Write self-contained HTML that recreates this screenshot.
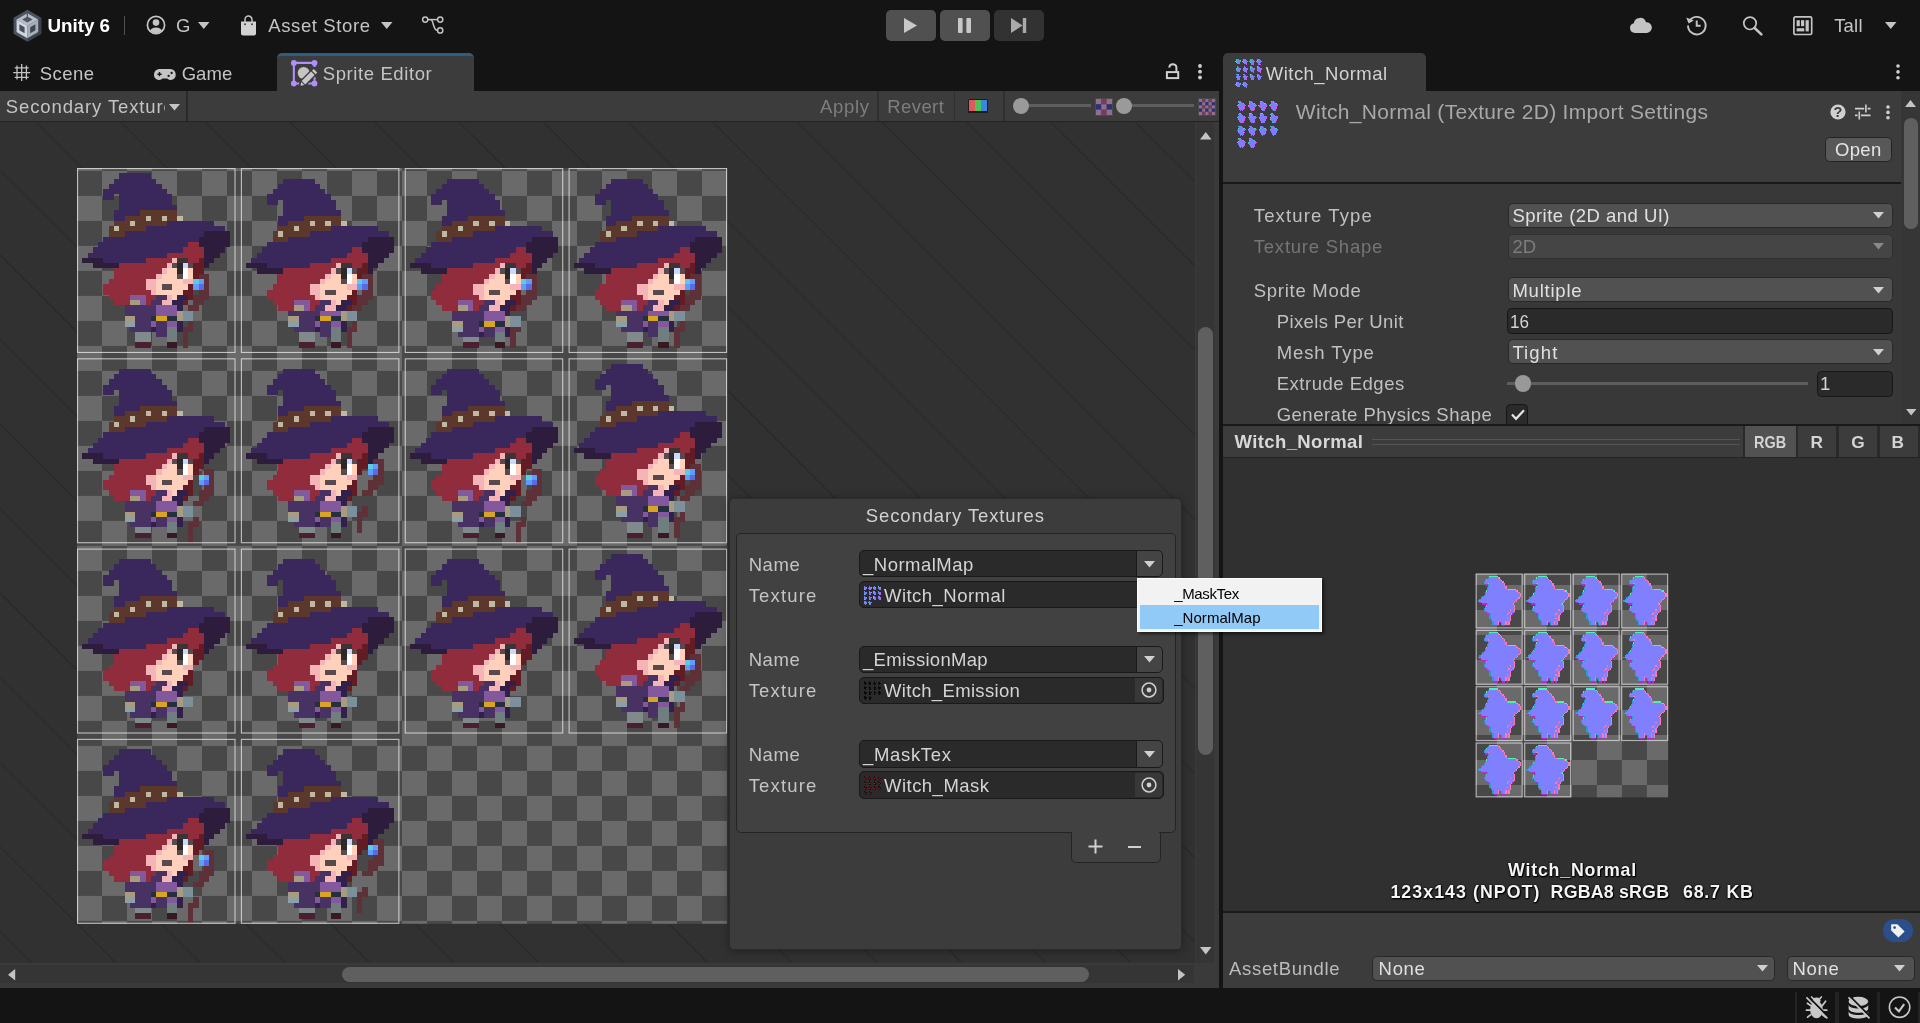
<!DOCTYPE html>
<html><head><meta charset="utf-8"><title>Unity - Sprite Editor</title>
<style>
html,body{margin:0;padding:0;}
body{width:1920px;height:1023px;overflow:hidden;background:#141414;position:relative;font-family:"Liberation Sans",sans-serif;}
.a{position:absolute;box-sizing:border-box;}
.t{position:absolute;white-space:nowrap;}
svg{display:block;overflow:visible;}
</style></head><body><div id="root" style="position:absolute;left:0;top:0;width:1920px;height:1023px;will-change:transform;">
<div class="a" style="left:0px;top:91px;width:1219px;height:30px;background:#3c3c3c;"></div>
<div class="a" style="left:0px;top:121px;width:1219px;height:1.5px;background:#232323;"></div>
<div class="a" style="left:0;top:122px;width:1196px;height:841px;background:#313131;overflow:hidden;"><svg style="position:absolute;left:0;top:-122px" width="1195" height="962"><g stroke="#2a2a2a" stroke-width="1.1" fill="none"><path d="M-809.4 122L30.6 962"/><path d="M-724.8 122L115.2 962"/><path d="M-640.3 122L199.7 962"/><path d="M-555.7 122L284.3 962"/><path d="M-471.1 122L368.9 962"/><path d="M-386.6 122L453.4 962"/><path d="M-302.0 122L538.0 962"/><path d="M-217.4 122L622.6 962"/><path d="M-132.9 122L707.1 962"/><path d="M-48.3 122L791.7 962"/><path d="M36.3 122L876.3 962"/><path d="M120.9 122L960.9 962"/><path d="M205.4 122L1045.4 962"/><path d="M290.0 122L1130.0 962"/><path d="M374.6 122L1214.6 962"/><path d="M459.1 122L1299.1 962"/><path d="M543.7 122L1383.7 962"/><path d="M628.3 122L1468.3 962"/><path d="M712.8 122L1552.8 962"/><path d="M797.4 122L1637.4 962"/><path d="M882.0 122L1722.0 962"/><path d="M966.5 122L1806.5 962"/><path d="M1051.1 122L1891.1 962"/><path d="M1135.7 122L1975.7 962"/></g></svg></div>
<svg class="a" style="left:0;top:0" width="1195" height="962"><defs><pattern id="chk" x="77" y="145.9" width="50" height="50" patternUnits="userSpaceOnUse"><rect width="50" height="50" fill="#6a6a6a"/><rect x="0" y="25" width="25" height="25" fill="#484848"/><rect x="25" y="0" width="25" height="25" fill="#484848"/></pattern><g id="hd" shape-rendering="crispEdges"><rect x="8" y="1" width="6" height="1" fill="#3a285c"/><rect x="7" y="2" width="8" height="1" fill="#3a285c"/><rect x="6" y="3" width="10" height="1" fill="#3a285c"/><rect x="5" y="4" width="12" height="1" fill="#3a285c"/><rect x="5" y="5" width="2" height="1" fill="#3a285c"/><rect x="8" y="5" width="10" height="1" fill="#3a285c"/><rect x="8" y="6" width="10" height="1" fill="#3a285c"/><rect x="8" y="7" width="11" height="1" fill="#3a285c"/><rect x="7" y="8" width="5" height="1" fill="#3a285c"/><rect x="12" y="8" width="7" height="1" fill="#5c382c"/><rect x="7" y="9" width="2" height="1" fill="#3a285c"/><rect x="9" y="9" width="4" height="1" fill="#5c382c"/><rect x="13" y="9" width="1" height="1" fill="#c0b8a0"/><rect x="14" y="9" width="2" height="1" fill="#5c382c"/><rect x="16" y="9" width="1" height="1" fill="#c0b8a0"/><rect x="17" y="9" width="2" height="1" fill="#5c382c"/><rect x="19" y="9" width="1" height="1" fill="#c0b8a0"/><rect x="7" y="10" width="3" height="1" fill="#5c382c"/><rect x="10" y="10" width="1" height="1" fill="#c0b8a0"/><rect x="11" y="10" width="6" height="1" fill="#5c382c"/><rect x="17" y="10" width="9" height="1" fill="#3a285c"/><rect x="6" y="11" width="1" height="1" fill="#5c382c"/><rect x="7" y="11" width="1" height="1" fill="#c0b8a0"/><rect x="8" y="11" width="5" height="1" fill="#5c382c"/><rect x="13" y="11" width="15" height="1" fill="#3a285c"/><rect x="6" y="12" width="3" height="1" fill="#5c382c"/><rect x="9" y="12" width="15" height="1" fill="#3a285c"/><rect x="24" y="12" width="5" height="1" fill="#2e1c3c"/><rect x="5" y="13" width="18" height="1" fill="#3a285c"/><rect x="23" y="13" width="6" height="1" fill="#2e1c3c"/><rect x="4" y="14" width="17" height="1" fill="#3a285c"/><rect x="21" y="14" width="2" height="1" fill="#902c3c"/><rect x="23" y="14" width="6" height="1" fill="#2e1c3c"/><rect x="3" y="15" width="17" height="1" fill="#3a285c"/><rect x="20" y="15" width="4" height="1" fill="#902c3c"/><rect x="24" y="15" width="4" height="1" fill="#2e1c3c"/><rect x="2" y="16" width="15" height="1" fill="#3a285c"/><rect x="17" y="16" width="7" height="1" fill="#902c3c"/><rect x="24" y="16" width="3" height="1" fill="#2e1c3c"/><rect x="1" y="17" width="4" height="1" fill="#2e1c3c"/><rect x="5" y="17" width="8" height="1" fill="#3a285c"/><rect x="13" y="17" width="5" height="1" fill="#902c3c"/><rect x="18" y="17" width="1" height="1" fill="#f4b4b8"/><rect x="19" y="17" width="2" height="1" fill="#3a3436"/><rect x="21" y="17" width="2" height="1" fill="#902c3c"/><rect x="23" y="17" width="1" height="1" fill="#641c24"/><rect x="24" y="17" width="2" height="1" fill="#2e1c3c"/><rect x="3" y="18" width="5" height="1" fill="#2e1c3c"/><rect x="8" y="18" width="9" height="1" fill="#902c3c"/><rect x="17" y="18" width="1" height="1" fill="#f4b4b8"/><rect x="18" y="18" width="1" height="1" fill="#564a4e"/><rect x="19" y="18" width="1" height="1" fill="#2c2828"/><rect x="20" y="18" width="1" height="1" fill="#c8d8ff"/><rect x="21" y="18" width="1" height="1" fill="#564a4e"/><rect x="22" y="18" width="2" height="1" fill="#641c24"/><rect x="24" y="18" width="1" height="1" fill="#2e1c3c"/><rect x="7" y="19" width="9" height="1" fill="#902c3c"/><rect x="16" y="19" width="1" height="1" fill="#f4b4b8"/><rect x="17" y="19" width="2" height="1" fill="#ffd0bc"/><rect x="19" y="19" width="1" height="1" fill="#2c2828"/><rect x="20" y="19" width="1" height="1" fill="#ffffff"/><rect x="21" y="19" width="1" height="1" fill="#ffd0bc"/><rect x="22" y="19" width="2" height="1" fill="#641c24"/><rect x="7" y="20" width="8" height="1" fill="#902c3c"/><rect x="15" y="20" width="1" height="1" fill="#f4b4b8"/><rect x="16" y="20" width="3" height="1" fill="#ffd0bc"/><rect x="19" y="20" width="1" height="1" fill="#564a4e"/><rect x="20" y="20" width="1" height="1" fill="#ffffff"/><rect x="21" y="20" width="1" height="1" fill="#ffd0bc"/><rect x="22" y="20" width="1" height="1" fill="#641c24"/><rect x="6" y="21" width="7" height="1" fill="#902c3c"/><rect x="13" y="21" width="2" height="1" fill="#f4b4b8"/><rect x="15" y="21" width="5" height="1" fill="#ffd0bc"/><rect x="20" y="21" width="2" height="1" fill="#f4b4b8"/><rect x="5" y="22" width="8" height="1" fill="#902c3c"/><rect x="13" y="22" width="2" height="1" fill="#f4b4b8"/><rect x="15" y="22" width="1" height="1" fill="#ffd0bc"/><rect x="16" y="22" width="2" height="1" fill="#564a4e"/><rect x="18" y="22" width="3" height="1" fill="#ffd0bc"/><rect x="21" y="22" width="1" height="1" fill="#641c24"/><rect x="5" y="23" width="9" height="1" fill="#902c3c"/><rect x="14" y="23" width="1" height="1" fill="#f4b4b8"/><rect x="15" y="23" width="5" height="1" fill="#ffd0bc"/><rect x="20" y="23" width="2" height="1" fill="#641c24"/><rect x="6" y="24" width="4" height="1" fill="#902c3c"/><rect x="10" y="24" width="3" height="1" fill="#84589c"/><rect x="13" y="24" width="2" height="1" fill="#902c3c"/><rect x="15" y="24" width="2" height="1" fill="#483264"/><rect x="17" y="24" width="1" height="1" fill="#f4b4b8"/><rect x="18" y="24" width="1" height="1" fill="#ffd0bc"/><rect x="19" y="24" width="2" height="1" fill="#32204c"/><rect x="21" y="24" width="1" height="1" fill="#641c24"/><rect x="7" y="25" width="3" height="1" fill="#902c3c"/><rect x="10" y="25" width="2" height="1" fill="#a89c80"/><rect x="12" y="25" width="1" height="1" fill="#84589c"/><rect x="13" y="25" width="1" height="1" fill="#902c3c"/><rect x="14" y="25" width="2" height="1" fill="#483264"/><rect x="16" y="25" width="2" height="1" fill="#f4b4b8"/><rect x="18" y="25" width="2" height="1" fill="#32204c"/><rect x="20" y="25" width="1" height="1" fill="#641c24"/></g><g id="hs" shape-rendering="crispEdges"><rect x="23" y="20" width="2" height="1" fill="#5e3038"/><rect x="22" y="21" width="1" height="1" fill="#5ccce0"/><rect x="23" y="21" width="1" height="1" fill="#609cff"/><rect x="24" y="21" width="1" height="1" fill="#5e3038"/><rect x="22" y="22" width="1" height="1" fill="#609cff"/><rect x="23" y="22" width="1" height="1" fill="#586ce0"/><rect x="24" y="22" width="1" height="1" fill="#5e3038"/><rect x="23" y="23" width="2" height="1" fill="#5e3038"/><rect x="22" y="24" width="3" height="1" fill="#5e3038"/><rect x="22" y="25" width="2" height="1" fill="#5e3038"/></g><g id="bd" shape-rendering="crispEdges"><rect x="9" y="26" width="6" height="1" fill="#483264"/><rect x="15" y="26" width="4" height="1" fill="#84589c"/><rect x="19" y="26" width="1" height="1" fill="#32204c"/><rect x="9" y="27" width="6" height="1" fill="#483264"/><rect x="15" y="27" width="4" height="1" fill="#84589c"/><rect x="19" y="27" width="1" height="1" fill="#a89c80"/><rect x="20" y="27" width="2" height="1" fill="#7c909c"/><rect x="9" y="28" width="2" height="1" fill="#a89c80"/><rect x="11" y="28" width="3" height="1" fill="#483264"/><rect x="14" y="28" width="1" height="1" fill="#24303c"/><rect x="15" y="28" width="2" height="1" fill="#d8a424"/><rect x="17" y="28" width="2" height="1" fill="#24303c"/><rect x="19" y="28" width="1" height="1" fill="#a89c80"/><rect x="20" y="28" width="2" height="1" fill="#7c909c"/><rect x="9" y="29" width="2" height="1" fill="#8ca0a8"/><rect x="11" y="29" width="3" height="1" fill="#483264"/><rect x="14" y="29" width="1" height="1" fill="#84589c"/><rect x="15" y="29" width="2" height="1" fill="#483264"/><rect x="17" y="29" width="2" height="1" fill="#84589c"/><rect x="19" y="29" width="1" height="1" fill="#32204c"/><rect x="10" y="30" width="4" height="1" fill="#483264"/><rect x="14" y="30" width="1" height="1" fill="#32204c"/><rect x="15" y="30" width="2" height="1" fill="#483264"/><rect x="17" y="30" width="2" height="1" fill="#707e80"/><rect x="19" y="30" width="1" height="1" fill="#32204c"/></g><g id="lg" shape-rendering="crispEdges"><rect x="11" y="31" width="3" height="1" fill="#808a8c"/><rect x="15" y="31" width="2" height="1" fill="#483264"/><rect x="17" y="31" width="2" height="1" fill="#707e80"/><rect x="11" y="32" width="3" height="1" fill="#808a8c"/><rect x="17" y="32" width="2" height="1" fill="#707e80"/><rect x="11" y="33" width="3" height="1" fill="#4a2030"/><rect x="17" y="33" width="2" height="1" fill="#381822"/></g><g id="bs" shape-rendering="crispEdges"><rect x="21" y="26" width="2" height="1" fill="#5e3038"/><rect x="21" y="29" width="1" height="1" fill="#5e3038"/><rect x="20" y="30" width="2" height="1" fill="#5e3038"/><rect x="20" y="31" width="1" height="1" fill="#5e3038"/><rect x="20" y="32" width="1" height="1" fill="#5e3038"/><rect x="20" y="33" width="1" height="1" fill="#5e3038"/></g><g id="sil" shape-rendering="crispEdges"><rect x="8" y="1" width="6" height="1"/><rect x="7" y="2" width="8" height="1"/><rect x="6" y="3" width="10" height="1"/><rect x="5" y="4" width="12" height="1"/><rect x="5" y="5" width="2" height="1"/><rect x="8" y="5" width="10" height="1"/><rect x="8" y="6" width="10" height="1"/><rect x="8" y="7" width="11" height="1"/><rect x="7" y="8" width="12" height="1"/><rect x="7" y="9" width="13" height="1"/><rect x="7" y="10" width="19" height="1"/><rect x="6" y="11" width="22" height="1"/><rect x="6" y="12" width="23" height="1"/><rect x="5" y="13" width="24" height="1"/><rect x="4" y="14" width="25" height="1"/><rect x="3" y="15" width="25" height="1"/><rect x="2" y="16" width="25" height="1"/><rect x="1" y="17" width="25" height="1"/><rect x="3" y="18" width="22" height="1"/><rect x="7" y="19" width="17" height="1"/><rect x="7" y="20" width="18" height="1"/><rect x="6" y="21" width="19" height="1"/><rect x="5" y="22" width="20" height="1"/><rect x="5" y="23" width="17" height="1"/><rect x="23" y="23" width="2" height="1"/><rect x="6" y="24" width="19" height="1"/><rect x="7" y="25" width="14" height="1"/><rect x="22" y="25" width="2" height="1"/><rect x="9" y="26" width="11" height="1"/><rect x="21" y="26" width="2" height="1"/><rect x="9" y="27" width="13" height="1"/><rect x="9" y="28" width="13" height="1"/><rect x="9" y="29" width="11" height="1"/><rect x="21" y="29" width="1" height="1"/><rect x="10" y="30" width="12" height="1"/><rect x="11" y="31" width="3" height="1"/><rect x="15" y="31" width="4" height="1"/><rect x="20" y="31" width="1" height="1"/><rect x="11" y="32" width="3" height="1"/><rect x="17" y="32" width="2" height="1"/><rect x="20" y="32" width="1" height="1"/><rect x="11" y="33" width="3" height="1"/><rect x="17" y="33" width="2" height="1"/><rect x="20" y="33" width="1" height="1"/></g></defs><rect x="77.0" y="168.0" width="650.12" height="755.83" fill="url(#chk)"/><g transform="translate(77.000 168.000) scale(5.2855)"><use href="#lg"/><use href="#bs" x="0" y="0"/><use href="#bd" y="0"/><use href="#hd" y="0"/><use href="#hs" x="0" y="0"/></g><rect x="77.55" y="168.55" width="157.47" height="183.89" fill="none" stroke="rgba(255,255,255,0.66)" stroke-width="1.1"/><g transform="translate(240.850 168.000) scale(5.2855)"><use href="#lg"/><use href="#bs" x="0" y="0"/><use href="#bd" y="0"/><use href="#hd" y="1"/><use href="#hs" x="0" y="0"/></g><rect x="241.40" y="168.55" width="157.47" height="183.89" fill="none" stroke="rgba(255,255,255,0.66)" stroke-width="1.1"/><g transform="translate(404.701 168.000) scale(5.2855)"><use href="#lg"/><use href="#bs" x="0" y="0"/><use href="#bd" y="1"/><use href="#hd" y="1"/><use href="#hs" x="0" y="0"/></g><rect x="405.25" y="168.55" width="157.47" height="183.89" fill="none" stroke="rgba(255,255,255,0.66)" stroke-width="1.1"/><g transform="translate(568.552 168.000) scale(5.2855)"><use href="#lg"/><use href="#bs" x="0" y="0"/><use href="#bd" y="0"/><use href="#hd" y="1"/><use href="#hs" x="0" y="0"/></g><rect x="569.10" y="168.55" width="157.47" height="183.89" fill="none" stroke="rgba(255,255,255,0.66)" stroke-width="1.1"/><g transform="translate(77.000 358.278) scale(5.2855)"><use href="#lg"/><use href="#bs" x="1" y="1"/><use href="#bd" y="1"/><use href="#hd" y="1"/><use href="#hs" x="1" y="1"/></g><rect x="77.55" y="358.83" width="157.47" height="183.89" fill="none" stroke="rgba(255,255,255,0.66)" stroke-width="1.1"/><g transform="translate(240.850 358.278) scale(5.2855)"><use href="#lg"/><use href="#bs" x="2" y="-1"/><use href="#bd" y="1"/><use href="#hd" y="1"/><use href="#hs" x="2" y="-1"/></g><rect x="241.40" y="358.83" width="157.47" height="183.89" fill="none" stroke="rgba(255,255,255,0.66)" stroke-width="1.1"/><g transform="translate(404.701 358.278) scale(5.2855)"><use href="#lg"/><use href="#bs" x="1" y="1"/><use href="#bd" y="1"/><use href="#hd" y="1"/><use href="#hs" x="1" y="1"/></g><rect x="405.25" y="358.83" width="157.47" height="183.89" fill="none" stroke="rgba(255,255,255,0.66)" stroke-width="1.1"/><g transform="translate(568.552 358.278) scale(5.2855)"><use href="#lg"/><use href="#bs" x="0" y="0"/><use href="#bd" y="0"/><use href="#hd" y="0"/><use href="#hs" x="0" y="0"/></g><rect x="569.10" y="358.83" width="157.47" height="183.89" fill="none" stroke="rgba(255,255,255,0.66)" stroke-width="1.1"/><g transform="translate(77.000 548.556) scale(5.2855)"><use href="#lg"/><use href="#bd" y="1"/><use href="#hd" y="1"/></g><rect x="77.55" y="549.11" width="157.47" height="183.89" fill="none" stroke="rgba(255,255,255,0.66)" stroke-width="1.1"/><g transform="translate(240.850 548.556) scale(5.2855)"><use href="#lg"/><use href="#bd" y="1"/><use href="#hd" y="1"/></g><rect x="241.40" y="549.11" width="157.47" height="183.89" fill="none" stroke="rgba(255,255,255,0.66)" stroke-width="1.1"/><g transform="translate(404.701 548.556) scale(5.2855)"><use href="#lg"/><use href="#bd" y="1"/><use href="#hd" y="1"/></g><rect x="405.25" y="549.11" width="157.47" height="183.89" fill="none" stroke="rgba(255,255,255,0.66)" stroke-width="1.1"/><g transform="translate(568.552 548.556) scale(5.2855)"><use href="#lg"/><use href="#bs" x="0" y="0"/><use href="#bd" y="0"/><use href="#hd" y="0"/><use href="#hs" x="0" y="0"/></g><rect x="569.10" y="549.11" width="157.47" height="183.89" fill="none" stroke="rgba(255,255,255,0.66)" stroke-width="1.1"/><g transform="translate(77.000 738.834) scale(5.2855)"><use href="#lg"/><use href="#bs" x="1" y="1"/><use href="#bd" y="1"/><use href="#hd" y="1"/><use href="#hs" x="1" y="1"/></g><rect x="77.55" y="739.38" width="157.47" height="183.89" fill="none" stroke="rgba(255,255,255,0.66)" stroke-width="1.1"/><g transform="translate(240.850 738.834) scale(5.2855)"><use href="#lg"/><use href="#bs" x="2" y="-1"/><use href="#bd" y="1"/><use href="#hd" y="1"/><use href="#hs" x="2" y="-1"/></g><rect x="241.40" y="739.38" width="157.47" height="183.89" fill="none" stroke="rgba(255,255,255,0.66)" stroke-width="1.1"/></svg>
<div class="a" style="left:1195px;top:122px;width:24px;height:866px;background:#3a3a3a;"></div>
<div class="a" style="left:0px;top:963px;width:1219px;height:25px;background:#3a3a3a;"></div>
<div class="a" style="left:1196px;top:122px;width:18.2px;height:841px;background:#353535;"></div>
<div class="a" style="left:1198px;top:327px;width:15px;height:428px;background:#5f5f5f;border-radius:7.5px;"></div>
<svg class="a" style="left:1199.7px;top:131.5px;" width="11.5" height="7.5" viewBox="0 0 11.5 7.5"><path d="M0 7.5H11.5L5.75 0Z" fill="#c4c4c4"/></svg>
<svg class="a" style="left:1199.7px;top:946.9px;" width="11.5" height="7.5" viewBox="0 0 11.5 7.5"><path d="M0 0H11.5L5.75 7.5Z" fill="#c4c4c4"/></svg>
<div class="a" style="left:0px;top:965px;width:1194px;height:18px;background:#353535;"></div>
<div class="a" style="left:342px;top:967px;width:747px;height:15px;background:#5f5f5f;border-radius:7.5px;"></div>
<svg class="a" style="left:8px;top:968.8px;" width="7.2" height="11.5" viewBox="0 0 7.2 11.5"><path d="M7.2 0V11.5L0 5.75Z" fill="#c4c4c4"/></svg>
<svg class="a" style="left:1178.1px;top:968.8px;" width="7.2" height="11.5" viewBox="0 0 7.2 11.5"><path d="M0 0V11.5L7.2 5.75Z" fill="#c4c4c4"/></svg>
<div class="a" style="left:1219px;top:53px;width:4px;height:935px;background:#141414;"></div>
<svg class="a" style="left:0;top:0" width="60" height="52"><polygon points="27.40,9.70 41.26,17.70 41.26,33.70 27.40,41.70 13.54,33.70 13.54,17.70" fill="#4a535e"/><polygon points="41.26,17.70 41.26,33.70 27.40,41.70 27.40,38.18 38.21,31.94 38.21,19.46" fill="#3a424c"/><polygon points="16.59,19.46 27.40,13.22 38.21,19.46 27.40,25.70" fill="#b6bdc9"/><polygon points="16.59,19.46 27.40,25.70 27.40,38.18 16.59,31.94" fill="#d2d6de"/><polygon points="27.40,25.70 38.21,19.46 38.21,31.94 27.40,38.18" fill="#a6aebb"/><polygon points="22.21,19.46 27.40,16.46 32.59,19.46 27.40,22.46" fill="#4c5864"/><polygon points="19.40,24.33 24.59,27.32 24.59,33.31 19.40,30.32" fill="#46505c"/><polygon points="30.21,27.32 35.40,24.33 35.40,30.32 30.21,33.31" fill="#3e4650"/><path d="M27.40 13.22V17.70" stroke="#4c5864" stroke-width="1.2"/></svg>
<div class="t" style="left:47.50px;top:14px;height:23px;line-height:23px;font-size:18.8px;color:#ffffff;font-weight:bold;letter-spacing:-0.030px;">Unity 6</div>
<div class="a" style="left:123.5px;top:16px;width:1.5px;height:19px;background:#505050;"></div>
<svg class="a" style="left:146px;top:15px;" width="20" height="20" viewBox="0 0 20 20"><defs><clipPath id="acl"><circle cx="10" cy="10" r="8.2"/></clipPath></defs><circle cx="10" cy="10" r="8.6" fill="none" stroke="#c4c4c4" stroke-width="1.7"/><circle cx="10" cy="7.6" r="3.3" fill="#c4c4c4"/><ellipse cx="10" cy="17.5" rx="6.6" ry="5" fill="#c4c4c4" clip-path="url(#acl)"/></svg>
<div class="t" style="left:176.00px;top:14px;height:23px;line-height:23px;font-size:18.5px;color:#c4c4c4;font-weight:normal;letter-spacing:0.000px;">G</div>
<svg class="a" style="left:198.25px;top:22.2px;" width="11.5" height="7" viewBox="0 0 11.5 7"><path d="M0 0H11.5L5.75 7Z" fill="#c4c4c4"/></svg>
<svg class="a" style="left:240px;top:15px;" width="17" height="21" viewBox="0 0 17 21"><path d="M5 7V4.6a3.5 3.5 0 0 1 7 0V7" fill="none" stroke="#c4c4c4" stroke-width="1.5"/><path d="M1 6.5H16V18.5a2 2 0 0 1-2 2H3a2 2 0 0 1-2-2Z" fill="#d2d2d2"/><circle cx="5" cy="9.2" r="1" fill="#444"/><circle cx="12" cy="9.2" r="1" fill="#444"/></svg>
<div class="t" style="left:268.30px;top:14px;height:23px;line-height:23px;font-size:18.5px;color:#c4c4c4;font-weight:normal;letter-spacing:0.607px;">Asset Store</div>
<svg class="a" style="left:380.65px;top:22.2px;" width="11.5" height="7" viewBox="0 0 11.5 7"><path d="M0 0H11.5L5.75 7Z" fill="#c4c4c4"/></svg>
<svg class="a" style="left:421px;top:15px;" width="24" height="20" viewBox="0 0 24 20"><g fill="none" stroke="#c4c4c4" stroke-width="1.5"><circle cx="4.2" cy="4.6" r="2.6"/><circle cx="19.2" cy="4.6" r="2.6"/><circle cx="19.2" cy="15.4" r="2.6"/><path d="M6.8 4.6H16.6"/><path d="M9.5 4.6C13 4.6 11.5 15.4 16.6 15.4"/></g></svg>
<div class="a" style="left:886px;top:10px;width:50px;height:31px;background:#505050;border-radius:5px;"></div>
<div class="a" style="left:940px;top:10px;width:50px;height:31px;background:#505050;border-radius:5px;"></div>
<div class="a" style="left:994px;top:10px;width:50px;height:31px;background:#323232;border-radius:5px;"></div>
<svg class="a" style="left:904px;top:18px;" width="13" height="15" viewBox="0 0 13 15"><path d="M0 0L13 7.5L0 15Z" fill="#c8c8c8"/></svg>
<svg class="a" style="left:958.3px;top:18px;" width="13" height="15" viewBox="0 0 13 15"><rect x="0" y="0" width="4.6" height="15" rx="1" fill="#c8c8c8"/><rect x="8.4" y="0" width="4.6" height="15" rx="1" fill="#c8c8c8"/></svg>
<svg class="a" style="left:1011px;top:18px;" width="16" height="15" viewBox="0 0 16 15"><path d="M0 0L11.6 7.5L0 15Z" fill="#aaaaaa"/><rect x="11.8" y="0" width="3.4" height="15" fill="#aaaaaa"/></svg>
<svg class="a" style="left:1629px;top:16px;" width="24" height="18" viewBox="0 0 24 18"><path d="M6 17a5 5 0 0 1-1.2-9.85A6.3 6.3 0 0 1 17 6.2a5.4 5.4 0 0 1 .9 10.8Z" fill="#c4c4c4"/></svg>
<svg class="a" style="left:1685px;top:14px;" width="24" height="24" viewBox="0 0 24 24"><g fill="none" stroke="#c4c4c4" stroke-width="1.9"><path d="M4.2 7.2A8.8 8.8 0 1 1 3 11.6"/><path d="M11.7 6.5V11.8H15.6"/></g><path d="M1.2 3.6L3.6 9.6L8.8 6.6Z" fill="#c4c4c4"/></svg>
<svg class="a" style="left:1741px;top:14px;" width="24" height="24" viewBox="0 0 24 24"><circle cx="9" cy="9.3" r="6.2" fill="none" stroke="#c4c4c4" stroke-width="1.7"/><path d="M13.6 14L20.4 20.4" stroke="#c4c4c4" stroke-width="2.6" stroke-linecap="round"/></svg>
<svg class="a" style="left:1792.5px;top:15.5px;" width="20" height="20" viewBox="0 0 20 20"><rect x="0.9" y="0.9" width="17.8" height="17.6" rx="1.5" fill="none" stroke="#c4c4c4" stroke-width="1.7"/><rect x="3.6" y="4.2" width="3.2" height="6" fill="#c4c4c4"/><rect x="8" y="4.2" width="3.2" height="6" fill="#c4c4c4"/><rect x="12.6" y="4.2" width="3.2" height="11.2" fill="#c4c4c4"/><rect x="3.6" y="12.2" width="7.6" height="3.2" fill="#c4c4c4"/></svg>
<div class="t" style="left:1834.20px;top:14px;height:23px;line-height:23px;font-size:18.5px;color:#c4c4c4;font-weight:normal;letter-spacing:0.180px;">Tall</div>
<svg class="a" style="left:1884.75px;top:22.0px;" width="11.5" height="7" viewBox="0 0 11.5 7"><path d="M0 0H11.5L5.75 7Z" fill="#c4c4c4"/></svg>
<svg class="a" style="left:12px;top:63px;" width="20" height="20" viewBox="0 0 20 20"><g stroke="#c4c4c4" stroke-width="1.3"><path d="M5.0 2.6V16.6M9.7 1.1V18.1M14.4 2.6V16.6M2.7 4.9H16.7M1.2 9.6H18.2M2.7 14.3H16.7"/></g></svg>
<div class="t" style="left:39.70px;top:62px;height:23px;line-height:23px;font-size:18.5px;color:#c4c4c4;font-weight:normal;letter-spacing:0.461px;">Scene</div>
<svg class="a" style="left:153.7px;top:69px;" width="22" height="11.5" viewBox="0 0 22 11.5"><path d="M5.4 0H16.3A5.4 5.4 0 0 1 21.7 5.4V6.2A4.8 4.8 0 0 1 16.9 11H16.2A4 4 0 0 1 13.2 9.6H8.5A4 4 0 0 1 5.5 11H4.8A4.8 4.8 0 0 1 0 6.2V5.4A5.4 5.4 0 0 1 5.4 0Z" fill="#c4c4c4"/><path d="M3.4 5.2H7.6M5.5 3.1V7.3" stroke="#141414" stroke-width="1.4"/><circle cx="14.6" cy="6.9" r="1.15" fill="#141414"/><circle cx="17.6" cy="4" r="1.15" fill="#141414"/></svg>
<div class="t" style="left:181.70px;top:62px;height:23px;line-height:23px;font-size:18.5px;color:#c4c4c4;font-weight:normal;letter-spacing:0.040px;">Game</div>
<div class="a" style="left:277px;top:53px;width:197px;height:38px;background:#3c3c3c;border-top:3px solid #2c5d87;border-radius:5px 5px 0 0;"></div>
<svg class="a" style="left:284px;top:54px;" width="40" height="38" viewBox="0 0 40 38"><g fill="none" stroke="#b090f8" stroke-width="2.1"><path d="M30.5 13V8.9H9.85V29.5H15.2M24.2 29.5H30.5V23"/></g><g fill="#b090f8"><circle cx="9.85" cy="8.9" r="2.9"/><circle cx="30.5" cy="8.9" r="2.9"/><circle cx="9.85" cy="29.5" r="2.9"/><circle cx="30.5" cy="29.5" r="2.9"/></g><circle cx="19.7" cy="19" r="6" fill="#c4c4c4"/><g transform="translate(24 24.2) rotate(45)"><path d="M-3.8 -11.6H3.8V7.5L0 12.2L-3.8 7.5Z" fill="#3c3c3c"/><path d="M-2.5 -10.6H2.5V-8.2H-2.5Z M-2.5 -6.9H2.5V6.4H-2.5Z M-2.2 7.4H2.2L0 10.6Z" fill="#c8c8c8"/></g></svg>
<div class="t" style="left:322.80px;top:62px;height:23px;line-height:23px;font-size:18.5px;color:#c4c4c4;font-weight:normal;letter-spacing:0.592px;">Sprite Editor</div>
<svg class="a" style="left:1160px;top:60px;" width="24" height="24" viewBox="0 0 24 24"><g fill="none" stroke="#d0d0d0" stroke-width="2"><rect x="6.9" y="12.1" width="11.3" height="6"/><path d="M9.4 7.6C9.2 3.6 16.4 3 16.4 7.4V11.6"/></g></svg>
<svg class="a" style="left:1196.5px;top:62.8px;" width="6" height="17.5" viewBox="0 0 6 17.5"><circle cx="3" cy="3.00" r="1.9" fill="#d0d0d0"/><circle cx="3" cy="8.70" r="1.9" fill="#d0d0d0"/><circle cx="3" cy="14.50" r="1.9" fill="#d0d0d0"/></svg>
<div class="t" style="left:5.80px;top:95px;height:23px;line-height:23px;font-size:18.5px;color:#c4c4c4;font-weight:normal;letter-spacing:0.884px;width:159.5px;overflow:hidden;">Secondary Textures</div>
<svg class="a" style="left:169.0px;top:103.55px;" width="11" height="6.5" viewBox="0 0 11 6.5"><path d="M0 0H11L5.5 6.5Z" fill="#c4c4c4"/></svg>
<div class="a" style="left:186px;top:91px;width:1.5px;height:30px;background:#2a2a2a;"></div>
<div class="t" style="left:820.00px;top:95px;height:23px;line-height:23px;font-size:18.5px;color:#7e7e7e;font-weight:normal;letter-spacing:0.680px;">Apply</div>
<div class="a" style="left:877px;top:91px;width:1.5px;height:30px;background:#303030;"></div>
<div class="t" style="left:887.30px;top:95px;height:23px;line-height:23px;font-size:18.5px;color:#7e7e7e;font-weight:normal;letter-spacing:0.402px;">Revert</div>
<div class="a" style="left:953.5px;top:91px;width:1.5px;height:30px;background:#303030;"></div>
<div class="a" style="left:967.5px;top:98.5px;width:20.5px;height:14px;background:#1c1c1c;border-radius:1.5px;"></div>
<div class="a" style="left:969px;top:100px;width:6px;height:11px;background:#e05a5a;"></div>
<div class="a" style="left:975px;top:100px;width:6px;height:11px;background:#4cc25a;"></div>
<div class="a" style="left:981px;top:100px;width:5.5px;height:11px;background:#3a86e0;"></div>
<div class="a" style="left:1003.3px;top:91px;width:1.5px;height:30px;background:#303030;"></div>
<div class="a" style="left:1021px;top:104.4px;width:70px;height:2.7px;background:#5e5e5e;"></div>
<div class="a" style="left:1013px;top:98px;width:16px;height:16px;background:#9a9a9a;border-radius:50%;"></div>
<div class="a" style="left:1124px;top:104.4px;width:70px;height:2.7px;background:#5e5e5e;"></div>
<div class="a" style="left:1116px;top:98px;width:16px;height:16px;background:#9a9a9a;border-radius:50%;"></div>
<div class="a" style="left:1095.3px;top:97.6px;width:18px;height:18px;background:#4a4a4a;"></div>
<svg class="a" style="left:1096.3px;top:98.6px;" width="16" height="16" viewBox="0 0 16 16"><rect x="0.00" y="0.00" width="5.33" height="5.33" fill="#8e6e92"/><rect x="0.00" y="5.33" width="5.33" height="5.33" fill="#2c3272"/><rect x="0.00" y="10.67" width="5.33" height="5.33" fill="#8e6e92"/><rect x="5.33" y="0.00" width="5.33" height="5.33" fill="#7a3c52"/><rect x="5.33" y="5.33" width="5.33" height="5.33" fill="#8e6e92"/><rect x="5.33" y="10.67" width="5.33" height="5.33" fill="#7a3c52"/><rect x="10.67" y="0.00" width="5.33" height="5.33" fill="#8e6e92"/><rect x="10.67" y="5.33" width="5.33" height="5.33" fill="#2c3272"/><rect x="10.67" y="10.67" width="5.33" height="5.33" fill="#8e6e92"/></svg>
<div class="a" style="left:1198px;top:97.6px;width:18px;height:18px;background:#4a4a4a;"></div>
<svg class="a" style="left:1199px;top:98.6px;" width="16" height="16" viewBox="0 0 16 16"><rect x="0.00" y="0.00" width="3.20" height="3.20" fill="#8e6e92"/><rect x="0.00" y="3.20" width="3.20" height="3.20" fill="#2c3272"/><rect x="0.00" y="6.40" width="3.20" height="3.20" fill="#8e6e92"/><rect x="0.00" y="9.60" width="3.20" height="3.20" fill="#2c3272"/><rect x="0.00" y="12.80" width="3.20" height="3.20" fill="#8e6e92"/><rect x="3.20" y="0.00" width="3.20" height="3.20" fill="#7a3c52"/><rect x="3.20" y="3.20" width="3.20" height="3.20" fill="#8e6e92"/><rect x="3.20" y="6.40" width="3.20" height="3.20" fill="#7a3c52"/><rect x="3.20" y="9.60" width="3.20" height="3.20" fill="#8e6e92"/><rect x="3.20" y="12.80" width="3.20" height="3.20" fill="#7a3c52"/><rect x="6.40" y="0.00" width="3.20" height="3.20" fill="#8e6e92"/><rect x="6.40" y="3.20" width="3.20" height="3.20" fill="#2c3272"/><rect x="6.40" y="6.40" width="3.20" height="3.20" fill="#8e6e92"/><rect x="6.40" y="9.60" width="3.20" height="3.20" fill="#2c3272"/><rect x="6.40" y="12.80" width="3.20" height="3.20" fill="#8e6e92"/><rect x="9.60" y="0.00" width="3.20" height="3.20" fill="#7a3c52"/><rect x="9.60" y="3.20" width="3.20" height="3.20" fill="#8e6e92"/><rect x="9.60" y="6.40" width="3.20" height="3.20" fill="#7a3c52"/><rect x="9.60" y="9.60" width="3.20" height="3.20" fill="#8e6e92"/><rect x="9.60" y="12.80" width="3.20" height="3.20" fill="#7a3c52"/><rect x="12.80" y="0.00" width="3.20" height="3.20" fill="#8e6e92"/><rect x="12.80" y="3.20" width="3.20" height="3.20" fill="#2c3272"/><rect x="12.80" y="6.40" width="3.20" height="3.20" fill="#8e6e92"/><rect x="12.80" y="9.60" width="3.20" height="3.20" fill="#2c3272"/><rect x="12.80" y="12.80" width="3.20" height="3.20" fill="#8e6e92"/></svg>
<div class="a" style="left:729px;top:498px;width:453px;height:452px;background:#3c3c3c;border:1.3px solid #2b2b2b;border-radius:5px;box-shadow:0 1px 9px rgba(0,0,0,0.35);"></div>
<div class="t" style="left:865.80px;top:504px;height:23px;line-height:23px;font-size:18.5px;color:#d2d2d2;font-weight:normal;letter-spacing:0.884px;">Secondary Textures</div>
<div class="a" style="left:1071px;top:830px;width:89.5px;height:32.5px;background:#414141;border:1.3px solid #242424;border-radius:0 0 5px 5px;"></div>
<div class="a" style="left:735.5px;top:533px;width:440px;height:300px;background:#414141;border:1.3px solid #242424;border-radius:5px;"></div>
<div class="a" style="left:1072.3px;top:830.5px;width:87px;height:3.5px;background:#414141;"></div>
<svg class="a" style="left:1087.6px;top:839.2px;" width="15" height="15" viewBox="0 0 15 15"><path d="M7.5 0.5V14.5M0.5 7.5H14.5" stroke="#d0d0d0" stroke-width="2"/></svg>
<svg class="a" style="left:1128px;top:845.7px;" width="13" height="2" viewBox="0 0 13 2"><rect width="13" height="2" fill="#d0d0d0"/></svg>
<div class="a" style="left:859px;top:550.3px;width:278px;height:27.2px;background:#2a2a2a;border:1.3px solid #191919;border-radius:5px 0 0 5px;"></div>
<div class="a" style="left:1136.3px;top:550.3px;width:27.2px;height:27.2px;background:#444444;border:1.3px solid #191919;border-radius:0 5px 5px 0;"></div>
<svg class="a" style="left:1144.2px;top:560.8499999999999px;" width="11" height="6.5" viewBox="0 0 11 6.5"><path d="M0 0H11L5.5 6.5Z" fill="#d0d0d0"/></svg>
<div class="t" style="left:748.70px;top:553px;height:23px;line-height:23px;font-size:18.5px;color:#c4c4c4;font-weight:normal;letter-spacing:0.550px;">Name</div>
<div class="t" style="left:863.00px;top:553px;height:23px;line-height:23px;font-size:18.5px;color:#d4d4d4;font-weight:normal;letter-spacing:0.489px;">_NormalMap</div>
<div class="a" style="left:859px;top:581.3px;width:304.5px;height:27.2px;background:#2a2a2a;border:1.3px solid #191919;border-radius:5px;"></div>
<div class="t" style="left:748.70px;top:584px;height:23px;line-height:23px;font-size:18.5px;color:#c4c4c4;font-weight:normal;letter-spacing:1.155px;">Texture</div>
<svg class="a" style="left:863.3px;top:585.5999999999999px;" width="18.8" height="19.4" viewBox="0 0 18.8 19.4"><g transform="scale(0.1528 0.1357)"><g transform="translate(2.40 2.80) scale(0.84)"><use href="#sil" x="-1.3" y="-1.3" fill="#48d0c8"/><use href="#sil" x="1.3" y="1.3" fill="#e050e0"/><use href="#sil" fill="#7c7cff"/></g><g transform="translate(33.40 2.80) scale(0.84)"><use href="#sil" x="-1.3" y="-1.3" fill="#48d0c8"/><use href="#sil" x="1.3" y="1.3" fill="#e050e0"/><use href="#sil" fill="#7c7cff"/></g><g transform="translate(64.40 2.80) scale(0.84)"><use href="#sil" x="-1.3" y="-1.3" fill="#48d0c8"/><use href="#sil" x="1.3" y="1.3" fill="#e050e0"/><use href="#sil" fill="#7c7cff"/></g><g transform="translate(95.40 2.80) scale(0.84)"><use href="#sil" x="-1.3" y="-1.3" fill="#48d0c8"/><use href="#sil" x="1.3" y="1.3" fill="#e050e0"/><use href="#sil" fill="#7c7cff"/></g><g transform="translate(2.40 38.80) scale(0.84)"><use href="#sil" x="-1.3" y="-1.3" fill="#48d0c8"/><use href="#sil" x="1.3" y="1.3" fill="#e050e0"/><use href="#sil" fill="#7c7cff"/></g><g transform="translate(33.40 38.80) scale(0.84)"><use href="#sil" x="-1.3" y="-1.3" fill="#48d0c8"/><use href="#sil" x="1.3" y="1.3" fill="#e050e0"/><use href="#sil" fill="#7c7cff"/></g><g transform="translate(64.40 38.80) scale(0.84)"><use href="#sil" x="-1.3" y="-1.3" fill="#48d0c8"/><use href="#sil" x="1.3" y="1.3" fill="#e050e0"/><use href="#sil" fill="#7c7cff"/></g><g transform="translate(95.40 38.80) scale(0.84)"><use href="#sil" x="-1.3" y="-1.3" fill="#48d0c8"/><use href="#sil" x="1.3" y="1.3" fill="#e050e0"/><use href="#sil" fill="#7c7cff"/></g><g transform="translate(2.40 74.80) scale(0.84)"><use href="#sil" x="-1.3" y="-1.3" fill="#48d0c8"/><use href="#sil" x="1.3" y="1.3" fill="#e050e0"/><use href="#sil" fill="#7c7cff"/></g><g transform="translate(33.40 74.80) scale(0.84)"><use href="#sil" x="-1.3" y="-1.3" fill="#48d0c8"/><use href="#sil" x="1.3" y="1.3" fill="#e050e0"/><use href="#sil" fill="#7c7cff"/></g><g transform="translate(64.40 74.80) scale(0.84)"><use href="#sil" x="-1.3" y="-1.3" fill="#48d0c8"/><use href="#sil" x="1.3" y="1.3" fill="#e050e0"/><use href="#sil" fill="#7c7cff"/></g><g transform="translate(95.40 74.80) scale(0.84)"><use href="#sil" x="-1.3" y="-1.3" fill="#48d0c8"/><use href="#sil" x="1.3" y="1.3" fill="#e050e0"/><use href="#sil" fill="#7c7cff"/></g><g transform="translate(2.40 110.80) scale(0.84)"><use href="#sil" x="-1.3" y="-1.3" fill="#48d0c8"/><use href="#sil" x="1.3" y="1.3" fill="#e050e0"/><use href="#sil" fill="#7c7cff"/></g><g transform="translate(33.40 110.80) scale(0.84)"><use href="#sil" x="-1.3" y="-1.3" fill="#48d0c8"/><use href="#sil" x="1.3" y="1.3" fill="#e050e0"/><use href="#sil" fill="#7c7cff"/></g></g></svg>
<div class="t" style="left:884.00px;top:584px;height:23px;line-height:23px;font-size:18.5px;color:#d4d4d4;font-weight:normal;letter-spacing:0.467px;">Witch_Normal</div>
<div class="a" style="left:859px;top:645.5px;width:278px;height:27.2px;background:#2a2a2a;border:1.3px solid #191919;border-radius:5px 0 0 5px;"></div>
<div class="a" style="left:1136.3px;top:645.5px;width:27.2px;height:27.2px;background:#444444;border:1.3px solid #191919;border-radius:0 5px 5px 0;"></div>
<svg class="a" style="left:1144.2px;top:656.05px;" width="11" height="6.5" viewBox="0 0 11 6.5"><path d="M0 0H11L5.5 6.5Z" fill="#d0d0d0"/></svg>
<div class="t" style="left:748.70px;top:648px;height:23px;line-height:23px;font-size:18.5px;color:#c4c4c4;font-weight:normal;letter-spacing:0.550px;">Name</div>
<div class="t" style="left:863.00px;top:648px;height:23px;line-height:23px;font-size:18.5px;color:#d4d4d4;font-weight:normal;letter-spacing:0.297px;">_EmissionMap</div>
<div class="a" style="left:859px;top:676.5px;width:304.5px;height:27.2px;background:#2a2a2a;border:1.3px solid #191919;border-radius:5px;"></div>
<div class="t" style="left:748.70px;top:679px;height:23px;line-height:23px;font-size:18.5px;color:#c4c4c4;font-weight:normal;letter-spacing:1.155px;">Texture</div>
<svg class="a" style="left:863.3px;top:680.8px;" width="18.8" height="19.4" viewBox="0 0 18.8 19.4"><g transform="scale(0.1528 0.1357)"><g transform="translate(2.40 2.80) scale(0.84)"><use href="#sil" fill="#0a0a0a"/><rect x="21" y="20" width="4" height="4" fill="#3c3c3c"/></g><g transform="translate(33.40 2.80) scale(0.84)"><use href="#sil" fill="#0a0a0a"/><rect x="21" y="20" width="4" height="4" fill="#3c3c3c"/></g><g transform="translate(64.40 2.80) scale(0.84)"><use href="#sil" fill="#0a0a0a"/><rect x="21" y="20" width="4" height="4" fill="#3c3c3c"/></g><g transform="translate(95.40 2.80) scale(0.84)"><use href="#sil" fill="#0a0a0a"/><rect x="21" y="20" width="4" height="4" fill="#3c3c3c"/></g><g transform="translate(2.40 38.80) scale(0.84)"><use href="#sil" fill="#0a0a0a"/><rect x="21" y="20" width="4" height="4" fill="#3c3c3c"/></g><g transform="translate(33.40 38.80) scale(0.84)"><use href="#sil" fill="#0a0a0a"/><rect x="21" y="20" width="4" height="4" fill="#3c3c3c"/></g><g transform="translate(64.40 38.80) scale(0.84)"><use href="#sil" fill="#0a0a0a"/><rect x="21" y="20" width="4" height="4" fill="#3c3c3c"/></g><g transform="translate(95.40 38.80) scale(0.84)"><use href="#sil" fill="#0a0a0a"/><rect x="21" y="20" width="4" height="4" fill="#3c3c3c"/></g><g transform="translate(2.40 74.80) scale(0.84)"><use href="#sil" fill="#0a0a0a"/><rect x="21" y="20" width="4" height="4" fill="#3c3c3c"/></g><g transform="translate(33.40 74.80) scale(0.84)"><use href="#sil" fill="#0a0a0a"/><rect x="21" y="20" width="4" height="4" fill="#3c3c3c"/></g><g transform="translate(64.40 74.80) scale(0.84)"><use href="#sil" fill="#0a0a0a"/><rect x="21" y="20" width="4" height="4" fill="#3c3c3c"/></g><g transform="translate(95.40 74.80) scale(0.84)"><use href="#sil" fill="#0a0a0a"/><rect x="21" y="20" width="4" height="4" fill="#3c3c3c"/></g><g transform="translate(2.40 110.80) scale(0.84)"><use href="#sil" fill="#0a0a0a"/><rect x="21" y="20" width="4" height="4" fill="#3c3c3c"/></g><g transform="translate(33.40 110.80) scale(0.84)"><use href="#sil" fill="#0a0a0a"/><rect x="21" y="20" width="4" height="4" fill="#3c3c3c"/></g></g></svg>
<div class="t" style="left:884.00px;top:679px;height:23px;line-height:23px;font-size:18.5px;color:#d4d4d4;font-weight:normal;letter-spacing:0.324px;">Witch_Emission</div>
<div class="a" style="left:1134.5px;top:677.8px;width:27.7px;height:24.6px;background:#383838;border-radius:0 4px 4px 0;"></div>
<svg class="a" style="left:1141.3px;top:682.1px;" width="16" height="16" viewBox="0 0 16 16"><circle cx="8" cy="8" r="6.9" fill="none" stroke="#d0d0d0" stroke-width="1.5"/><circle cx="8" cy="8" r="2.4" fill="#d0d0d0"/></svg>
<div class="a" style="left:859px;top:740.4px;width:278px;height:27.2px;background:#2a2a2a;border:1.3px solid #191919;border-radius:5px 0 0 5px;"></div>
<div class="a" style="left:1136.3px;top:740.4px;width:27.2px;height:27.2px;background:#444444;border:1.3px solid #191919;border-radius:0 5px 5px 0;"></div>
<svg class="a" style="left:1144.2px;top:750.9499999999999px;" width="11" height="6.5" viewBox="0 0 11 6.5"><path d="M0 0H11L5.5 6.5Z" fill="#d0d0d0"/></svg>
<div class="t" style="left:748.70px;top:743px;height:23px;line-height:23px;font-size:18.5px;color:#c4c4c4;font-weight:normal;letter-spacing:0.550px;">Name</div>
<div class="t" style="left:863.00px;top:743px;height:23px;line-height:23px;font-size:18.5px;color:#d4d4d4;font-weight:normal;letter-spacing:0.674px;">_MaskTex</div>
<div class="a" style="left:859px;top:771.4px;width:304.5px;height:27.2px;background:#2a2a2a;border:1.3px solid #191919;border-radius:5px;"></div>
<div class="t" style="left:748.70px;top:774px;height:23px;line-height:23px;font-size:18.5px;color:#c4c4c4;font-weight:normal;letter-spacing:1.155px;">Texture</div>
<svg class="a" style="left:863.3px;top:775.6999999999999px;" width="18.8" height="19.4" viewBox="0 0 18.8 19.4"><g transform="scale(0.1528 0.1357)"><g transform="translate(2.40 2.80) scale(0.84)"><use href="#sil" fill="#1a1012"/><rect x="8" y="16" width="9" height="7" fill="#e01818"/><rect x="17" y="4" width="6" height="6" fill="#d01414"/></g><g transform="translate(33.40 2.80) scale(0.84)"><use href="#sil" fill="#1a1012"/><rect x="8" y="16" width="9" height="7" fill="#e01818"/><rect x="17" y="4" width="6" height="6" fill="#d01414"/></g><g transform="translate(64.40 2.80) scale(0.84)"><use href="#sil" fill="#1a1012"/><rect x="8" y="16" width="9" height="7" fill="#e01818"/><rect x="17" y="4" width="6" height="6" fill="#d01414"/></g><g transform="translate(95.40 2.80) scale(0.84)"><use href="#sil" fill="#1a1012"/><rect x="8" y="16" width="9" height="7" fill="#e01818"/><rect x="17" y="4" width="6" height="6" fill="#d01414"/></g><g transform="translate(2.40 38.80) scale(0.84)"><use href="#sil" fill="#1a1012"/><rect x="8" y="16" width="9" height="7" fill="#e01818"/><rect x="17" y="4" width="6" height="6" fill="#d01414"/></g><g transform="translate(33.40 38.80) scale(0.84)"><use href="#sil" fill="#1a1012"/><rect x="8" y="16" width="9" height="7" fill="#e01818"/><rect x="17" y="4" width="6" height="6" fill="#d01414"/></g><g transform="translate(64.40 38.80) scale(0.84)"><use href="#sil" fill="#1a1012"/><rect x="8" y="16" width="9" height="7" fill="#e01818"/><rect x="17" y="4" width="6" height="6" fill="#d01414"/></g><g transform="translate(95.40 38.80) scale(0.84)"><use href="#sil" fill="#1a1012"/><rect x="8" y="16" width="9" height="7" fill="#e01818"/><rect x="17" y="4" width="6" height="6" fill="#d01414"/></g><g transform="translate(2.40 74.80) scale(0.84)"><use href="#sil" fill="#1a1012"/><rect x="8" y="16" width="9" height="7" fill="#e01818"/><rect x="17" y="4" width="6" height="6" fill="#d01414"/></g><g transform="translate(33.40 74.80) scale(0.84)"><use href="#sil" fill="#1a1012"/><rect x="8" y="16" width="9" height="7" fill="#e01818"/><rect x="17" y="4" width="6" height="6" fill="#d01414"/></g><g transform="translate(64.40 74.80) scale(0.84)"><use href="#sil" fill="#1a1012"/><rect x="8" y="16" width="9" height="7" fill="#e01818"/><rect x="17" y="4" width="6" height="6" fill="#d01414"/></g><g transform="translate(95.40 74.80) scale(0.84)"><use href="#sil" fill="#1a1012"/><rect x="8" y="16" width="9" height="7" fill="#e01818"/><rect x="17" y="4" width="6" height="6" fill="#d01414"/></g><g transform="translate(2.40 110.80) scale(0.84)"><use href="#sil" fill="#1a1012"/><rect x="8" y="16" width="9" height="7" fill="#e01818"/><rect x="17" y="4" width="6" height="6" fill="#d01414"/></g><g transform="translate(33.40 110.80) scale(0.84)"><use href="#sil" fill="#1a1012"/><rect x="8" y="16" width="9" height="7" fill="#e01818"/><rect x="17" y="4" width="6" height="6" fill="#d01414"/></g></g></svg>
<div class="t" style="left:884.00px;top:774px;height:23px;line-height:23px;font-size:18.5px;color:#d4d4d4;font-weight:normal;letter-spacing:0.473px;">Witch_Mask</div>
<div class="a" style="left:1134.5px;top:772.6999999999999px;width:27.7px;height:24.6px;background:#383838;border-radius:0 4px 4px 0;"></div>
<svg class="a" style="left:1141.3px;top:777.0px;" width="16" height="16" viewBox="0 0 16 16"><circle cx="8" cy="8" r="6.9" fill="none" stroke="#d0d0d0" stroke-width="1.5"/><circle cx="8" cy="8" r="2.4" fill="#d0d0d0"/></svg>
<div class="a" style="left:1223px;top:53px;width:203.2px;height:38px;background:#3c3c3c;border-radius:5px 5px 0 0;"></div>
<svg class="a" style="left:1235px;top:57.5px;" width="27.5" height="30.5" viewBox="0 0 27.5 30.5"><g transform="scale(0.2236 0.2133)"><g transform="translate(2.40 2.80) scale(0.84)"><use href="#sil" x="-1.3" y="-1.3" fill="#48d0c8"/><use href="#sil" x="1.3" y="1.3" fill="#e050e0"/><use href="#sil" fill="#7c7cff"/></g><g transform="translate(33.40 2.80) scale(0.84)"><use href="#sil" x="-1.3" y="-1.3" fill="#48d0c8"/><use href="#sil" x="1.3" y="1.3" fill="#e050e0"/><use href="#sil" fill="#7c7cff"/></g><g transform="translate(64.40 2.80) scale(0.84)"><use href="#sil" x="-1.3" y="-1.3" fill="#48d0c8"/><use href="#sil" x="1.3" y="1.3" fill="#e050e0"/><use href="#sil" fill="#7c7cff"/></g><g transform="translate(95.40 2.80) scale(0.84)"><use href="#sil" x="-1.3" y="-1.3" fill="#48d0c8"/><use href="#sil" x="1.3" y="1.3" fill="#e050e0"/><use href="#sil" fill="#7c7cff"/></g><g transform="translate(2.40 38.80) scale(0.84)"><use href="#sil" x="-1.3" y="-1.3" fill="#48d0c8"/><use href="#sil" x="1.3" y="1.3" fill="#e050e0"/><use href="#sil" fill="#7c7cff"/></g><g transform="translate(33.40 38.80) scale(0.84)"><use href="#sil" x="-1.3" y="-1.3" fill="#48d0c8"/><use href="#sil" x="1.3" y="1.3" fill="#e050e0"/><use href="#sil" fill="#7c7cff"/></g><g transform="translate(64.40 38.80) scale(0.84)"><use href="#sil" x="-1.3" y="-1.3" fill="#48d0c8"/><use href="#sil" x="1.3" y="1.3" fill="#e050e0"/><use href="#sil" fill="#7c7cff"/></g><g transform="translate(95.40 38.80) scale(0.84)"><use href="#sil" x="-1.3" y="-1.3" fill="#48d0c8"/><use href="#sil" x="1.3" y="1.3" fill="#e050e0"/><use href="#sil" fill="#7c7cff"/></g><g transform="translate(2.40 74.80) scale(0.84)"><use href="#sil" x="-1.3" y="-1.3" fill="#48d0c8"/><use href="#sil" x="1.3" y="1.3" fill="#e050e0"/><use href="#sil" fill="#7c7cff"/></g><g transform="translate(33.40 74.80) scale(0.84)"><use href="#sil" x="-1.3" y="-1.3" fill="#48d0c8"/><use href="#sil" x="1.3" y="1.3" fill="#e050e0"/><use href="#sil" fill="#7c7cff"/></g><g transform="translate(64.40 74.80) scale(0.84)"><use href="#sil" x="-1.3" y="-1.3" fill="#48d0c8"/><use href="#sil" x="1.3" y="1.3" fill="#e050e0"/><use href="#sil" fill="#7c7cff"/></g><g transform="translate(95.40 74.80) scale(0.84)"><use href="#sil" x="-1.3" y="-1.3" fill="#48d0c8"/><use href="#sil" x="1.3" y="1.3" fill="#e050e0"/><use href="#sil" fill="#7c7cff"/></g><g transform="translate(2.40 110.80) scale(0.84)"><use href="#sil" x="-1.3" y="-1.3" fill="#48d0c8"/><use href="#sil" x="1.3" y="1.3" fill="#e050e0"/><use href="#sil" fill="#7c7cff"/></g><g transform="translate(33.40 110.80) scale(0.84)"><use href="#sil" x="-1.3" y="-1.3" fill="#48d0c8"/><use href="#sil" x="1.3" y="1.3" fill="#e050e0"/><use href="#sil" fill="#7c7cff"/></g></g></svg>
<div class="t" style="left:1265.80px;top:62px;height:23px;line-height:23px;font-size:18.5px;color:#d2d2d2;font-weight:normal;letter-spacing:0.458px;">Witch_Normal</div>
<svg class="a" style="left:1895.3px;top:62.8px;" width="6" height="17.700000000000003" viewBox="0 0 6 17.700000000000003"><circle cx="3" cy="3.00" r="1.8" fill="#d0d0d0"/><circle cx="3" cy="8.90" r="1.8" fill="#d0d0d0"/><circle cx="3" cy="14.70" r="1.8" fill="#d0d0d0"/></svg>
<div class="a" style="left:1223px;top:91px;width:697px;height:91.5px;background:#3c3c3c;"></div>
<div class="a" style="left:1223px;top:182px;width:678px;height:1.8px;background:#1a1a1a;"></div>
<div class="a" style="left:1223px;top:183.8px;width:697px;height:241px;background:#383838;"></div>
<div class="a" style="left:1901px;top:91px;width:19px;height:333.5px;background:#363636;"></div>
<div class="a" style="left:1904px;top:118px;width:13.5px;height:111px;background:#5f5f5f;border-radius:6.75px;"></div>
<svg class="a" style="left:1905.3px;top:99.8px;" width="11" height="7" viewBox="0 0 11 7"><path d="M0 7H11L5.5 0Z" fill="#c4c4c4"/></svg>
<svg class="a" style="left:1906px;top:408.9px;" width="10.4" height="6.5" viewBox="0 0 10.4 6.5"><path d="M0 0H10.4L5.2 6.5Z" fill="#c4c4c4"/></svg>
<svg class="a" style="left:1235.8px;top:100px;" width="43" height="49" viewBox="0 0 43 49"><g transform="scale(0.3496 0.3427)"><g transform="translate(2.40 2.80) scale(0.84)"><use href="#sil" x="-1.3" y="-1.3" fill="#48d0c8"/><use href="#sil" x="1.3" y="1.3" fill="#e050e0"/><use href="#sil" fill="#7c7cff"/></g><g transform="translate(33.40 2.80) scale(0.84)"><use href="#sil" x="-1.3" y="-1.3" fill="#48d0c8"/><use href="#sil" x="1.3" y="1.3" fill="#e050e0"/><use href="#sil" fill="#7c7cff"/></g><g transform="translate(64.40 2.80) scale(0.84)"><use href="#sil" x="-1.3" y="-1.3" fill="#48d0c8"/><use href="#sil" x="1.3" y="1.3" fill="#e050e0"/><use href="#sil" fill="#7c7cff"/></g><g transform="translate(95.40 2.80) scale(0.84)"><use href="#sil" x="-1.3" y="-1.3" fill="#48d0c8"/><use href="#sil" x="1.3" y="1.3" fill="#e050e0"/><use href="#sil" fill="#7c7cff"/></g><g transform="translate(2.40 38.80) scale(0.84)"><use href="#sil" x="-1.3" y="-1.3" fill="#48d0c8"/><use href="#sil" x="1.3" y="1.3" fill="#e050e0"/><use href="#sil" fill="#7c7cff"/></g><g transform="translate(33.40 38.80) scale(0.84)"><use href="#sil" x="-1.3" y="-1.3" fill="#48d0c8"/><use href="#sil" x="1.3" y="1.3" fill="#e050e0"/><use href="#sil" fill="#7c7cff"/></g><g transform="translate(64.40 38.80) scale(0.84)"><use href="#sil" x="-1.3" y="-1.3" fill="#48d0c8"/><use href="#sil" x="1.3" y="1.3" fill="#e050e0"/><use href="#sil" fill="#7c7cff"/></g><g transform="translate(95.40 38.80) scale(0.84)"><use href="#sil" x="-1.3" y="-1.3" fill="#48d0c8"/><use href="#sil" x="1.3" y="1.3" fill="#e050e0"/><use href="#sil" fill="#7c7cff"/></g><g transform="translate(2.40 74.80) scale(0.84)"><use href="#sil" x="-1.3" y="-1.3" fill="#48d0c8"/><use href="#sil" x="1.3" y="1.3" fill="#e050e0"/><use href="#sil" fill="#7c7cff"/></g><g transform="translate(33.40 74.80) scale(0.84)"><use href="#sil" x="-1.3" y="-1.3" fill="#48d0c8"/><use href="#sil" x="1.3" y="1.3" fill="#e050e0"/><use href="#sil" fill="#7c7cff"/></g><g transform="translate(64.40 74.80) scale(0.84)"><use href="#sil" x="-1.3" y="-1.3" fill="#48d0c8"/><use href="#sil" x="1.3" y="1.3" fill="#e050e0"/><use href="#sil" fill="#7c7cff"/></g><g transform="translate(95.40 74.80) scale(0.84)"><use href="#sil" x="-1.3" y="-1.3" fill="#48d0c8"/><use href="#sil" x="1.3" y="1.3" fill="#e050e0"/><use href="#sil" fill="#7c7cff"/></g><g transform="translate(2.40 110.80) scale(0.84)"><use href="#sil" x="-1.3" y="-1.3" fill="#48d0c8"/><use href="#sil" x="1.3" y="1.3" fill="#e050e0"/><use href="#sil" fill="#7c7cff"/></g><g transform="translate(33.40 110.80) scale(0.84)"><use href="#sil" x="-1.3" y="-1.3" fill="#48d0c8"/><use href="#sil" x="1.3" y="1.3" fill="#e050e0"/><use href="#sil" fill="#7c7cff"/></g></g></svg>
<div class="t" style="left:1295.80px;top:99px;height:25px;line-height:25px;font-size:21px;color:#a8a8a8;font-weight:normal;letter-spacing:0.298px;">Witch_Normal (Texture 2D) Import Settings</div>
<svg class="a" style="left:1829.5px;top:103.7px;" width="16" height="16" viewBox="0 0 16 16"><circle cx="8" cy="8" r="7.6" fill="#d0d0d0"/></svg>
<div class="t" style="left:1833.60px;top:103px;height:18px;line-height:18px;font-size:14.5px;color:#3c3c3c;font-weight:bold;letter-spacing:0.000px;">?</div>
<svg class="a" style="left:1855px;top:104px;" width="16" height="16" viewBox="0 0 16 16"><g stroke="#d0d0d0" stroke-width="1.6" fill="none"><path d="M0 4.6H9.2M12.6 4.6H15.5M10.9 0.6V8.6M0 11.4H2.6M6 11.4H15.5M4.3 7.6V15.4"/></g></svg>
<svg class="a" style="left:1884.5px;top:103.7px;" width="6" height="16.799999999999997" viewBox="0 0 6 16.799999999999997"><circle cx="3" cy="3.00" r="1.8" fill="#d0d0d0"/><circle cx="3" cy="8.40" r="1.8" fill="#d0d0d0"/><circle cx="3" cy="13.80" r="1.8" fill="#d0d0d0"/></svg>
<div class="a" style="left:1824.5px;top:136.7px;width:67.2px;height:25px;background:#585858;border:1.3px solid #242424;border-radius:4.5px;"></div>
<div class="t" style="left:1835.00px;top:138px;height:23px;line-height:23px;font-size:18.5px;color:#e4e4e4;font-weight:normal;letter-spacing:0.348px;">Open</div>
<div class="t" style="left:1253.80px;top:204px;height:23px;line-height:23px;font-size:18.5px;color:#c0c0c0;font-weight:normal;letter-spacing:1.129px;">Texture Type</div>
<div class="a" style="left:1507.5px;top:202.7px;width:385px;height:25px;background:#515151;border:1.3px solid #282828;border-radius:4.5px;"></div>
<div class="t" style="left:1512.40px;top:204px;height:23px;line-height:23px;font-size:18.5px;color:#e0e0e0;font-weight:normal;letter-spacing:0.471px;">Sprite (2D and UI)</div>
<svg class="a" style="left:1873.0px;top:212.25px;" width="11" height="6.5" viewBox="0 0 11 6.5"><path d="M0 0H11L5.5 6.5Z" fill="#d0d0d0"/></svg>
<div class="t" style="left:1253.80px;top:235px;height:23px;line-height:23px;font-size:18.5px;color:#757575;font-weight:normal;letter-spacing:0.766px;">Texture Shape</div>
<div class="a" style="left:1507.5px;top:233.8px;width:385px;height:25px;background:#454545;border:1.3px solid #303030;border-radius:4.5px;"></div>
<div class="t" style="left:1512.40px;top:235px;height:23px;line-height:23px;font-size:18.5px;color:#7c7c7c;font-weight:normal;letter-spacing:-0.050px;">2D</div>
<svg class="a" style="left:1873.0px;top:243.35000000000002px;" width="11" height="6.5" viewBox="0 0 11 6.5"><path d="M0 0H11L5.5 6.5Z" fill="#8a8a8a"/></svg>
<div class="t" style="left:1253.80px;top:279px;height:23px;line-height:23px;font-size:18.5px;color:#c0c0c0;font-weight:normal;letter-spacing:0.715px;">Sprite Mode</div>
<div class="a" style="left:1507.5px;top:277.4px;width:385px;height:25px;background:#515151;border:1.3px solid #282828;border-radius:4.5px;"></div>
<div class="t" style="left:1512.40px;top:279px;height:23px;line-height:23px;font-size:18.5px;color:#e0e0e0;font-weight:normal;letter-spacing:0.779px;">Multiple</div>
<svg class="a" style="left:1873.0px;top:286.95px;" width="11" height="6.5" viewBox="0 0 11 6.5"><path d="M0 0H11L5.5 6.5Z" fill="#d0d0d0"/></svg>
<div class="t" style="left:1276.70px;top:310px;height:23px;line-height:23px;font-size:18.5px;color:#c0c0c0;font-weight:normal;letter-spacing:0.384px;">Pixels Per Unit</div>
<div class="a" style="left:1506.5px;top:307.7px;width:386.5px;height:26.8px;background:#2a2a2a;border:1.5px solid #161616;border-radius:4.5px;"></div>
<div class="t" style="left:1510.30px;top:310px;height:23px;line-height:23px;font-size:18.5px;color:#d4d4d4;font-weight:normal;letter-spacing:0.000px;transform:scaleX(0.9233);transform-origin:0 50%;">16</div>
<div class="t" style="left:1276.70px;top:341px;height:23px;line-height:23px;font-size:18.5px;color:#c0c0c0;font-weight:normal;letter-spacing:0.881px;">Mesh Type</div>
<div class="a" style="left:1507.5px;top:339.4px;width:385px;height:25px;background:#515151;border:1.3px solid #282828;border-radius:4.5px;"></div>
<div class="t" style="left:1512.40px;top:341px;height:23px;line-height:23px;font-size:18.5px;color:#e0e0e0;font-weight:normal;letter-spacing:1.114px;">Tight</div>
<svg class="a" style="left:1873.0px;top:348.95px;" width="11" height="6.5" viewBox="0 0 11 6.5"><path d="M0 0H11L5.5 6.5Z" fill="#d0d0d0"/></svg>
<div class="t" style="left:1276.70px;top:372px;height:23px;line-height:23px;font-size:18.5px;color:#c0c0c0;font-weight:normal;letter-spacing:0.512px;">Extrude Edges</div>
<div class="a" style="left:1506.5px;top:382.2px;width:301.5px;height:2.6px;background:#5e5e5e;"></div>
<div class="a" style="left:1514.6px;top:375.4px;width:16.2px;height:16.2px;background:#999999;border-radius:50%;"></div>
<div class="a" style="left:1816.5px;top:370.6px;width:76.5px;height:26.8px;background:#2a2a2a;border:1.5px solid #161616;border-radius:4.5px;"></div>
<div class="t" style="left:1820.00px;top:372px;height:23px;line-height:23px;font-size:18.5px;color:#d4d4d4;font-weight:normal;letter-spacing:0.000px;">1</div>
<div class="a" style="left:1223px;top:396px;width:678px;height:28.5px;overflow:hidden;">
<div class="t" style="left:53.70px;top:7px;height:23px;line-height:23px;font-size:18.5px;color:#c0c0c0;font-weight:normal;letter-spacing:0.498px;">Generate Physics Shape</div>
<div class="a" style="left:283.4000000000001px;top:8.300000000000011px;width:21.2px;height:24px;background:#2a2a2a;border:1.5px solid #161616;border-radius:4.5px;"></div>
<svg class="a" style="left:287.5px;top:13px;" width="14" height="12" viewBox="0 0 14 12"><path d="M1 5.6L5 9.8L13 1.2" fill="none" stroke="#e4e4e4" stroke-width="2.2"/></svg>
</div>
<div class="a" style="left:1223px;top:424.2px;width:697px;height:1.8px;background:#1a1a1a;"></div>
<div class="a" style="left:1223px;top:426px;width:697px;height:30.9px;background:#3c3c3c;"></div>
<div class="a" style="left:1223px;top:456.9px;width:697px;height:1.4px;background:#242424;"></div>
<div class="t" style="left:1234.60px;top:430px;height:23px;line-height:23px;font-size:18.5px;color:#d8d8d8;font-weight:bold;letter-spacing:0.371px;">Witch_Normal</div>
<div class="a" style="left:1371.8px;top:439px;width:368px;height:1.2px;background:#555555;"></div>
<div class="a" style="left:1371.8px;top:444.3px;width:368px;height:1.2px;background:#555555;"></div>
<div class="a" style="left:1742.9px;top:426px;width:2px;height:30.9px;background:#2a2a2a;"></div>
<div class="a" style="left:1744.9px;top:426px;width:51.2px;height:30.9px;background:#525252;"></div>
<div class="a" style="left:1796.1px;top:426px;width:2px;height:30.9px;background:#2a2a2a;"></div>
<div class="a" style="left:1836.4px;top:426px;width:2.5px;height:30.9px;background:#2a2a2a;"></div>
<div class="a" style="left:1877.2px;top:426px;width:2.8px;height:30.9px;background:#2a2a2a;"></div>
<div class="a" style="left:1918.1px;top:426px;width:1.9px;height:30.9px;background:#2a2a2a;"></div>
<div class="t" style="left:1754.30px;top:431px;height:22px;line-height:22px;font-size:17.3px;color:#d4d4d4;font-weight:bold;letter-spacing:0.000px;transform:scaleX(0.8350);transform-origin:0 50%;">RGB</div>
<div class="t" style="left:1810.55px;top:431px;height:22px;line-height:22px;font-size:17.3px;color:#d4d4d4;font-weight:bold;letter-spacing:0.000px;">R</div>
<div class="t" style="left:1851.27px;top:431px;height:22px;line-height:22px;font-size:17.3px;color:#d4d4d4;font-weight:bold;letter-spacing:0.000px;">G</div>
<div class="t" style="left:1891.45px;top:431px;height:22px;line-height:22px;font-size:17.3px;color:#d4d4d4;font-weight:bold;letter-spacing:0.000px;">B</div>
<div class="a" style="left:1223px;top:458px;width:697px;height:453px;background:#303030;"></div>
<svg class="a" style="left:0;top:0" width="1920" height="912"><defs><pattern id="chk2" x="1571.9" y="760" width="50" height="50" patternUnits="userSpaceOnUse"><rect width="50" height="50" fill="#484848"/><rect x="0" y="0" width="25" height="25" fill="#6a6a6a"/><rect x="25" y="25" width="25" height="25" fill="#6a6a6a"/></pattern></defs><rect x="1475.7" y="573.6" width="192.43" height="223.72" fill="url(#chk2)"/><g transform="translate(1477.70 575.60) scale(1.4550)"><use href="#sil" x="0" y="0.9" fill="#b828d0"/><use href="#sil" x="0" y="-0.9" fill="#50f0b0"/><use href="#sil" x="-0.9" y="0" fill="#2a9cd0"/><use href="#sil" x="0.9" y="0" fill="#ff78b4"/><use href="#sil" fill="#8080ff"/></g><rect x="1476.20" y="574.10" width="45.94" height="53.76" fill="none" stroke="rgba(255,255,255,0.58)" stroke-width="1.15"/><g transform="translate(1526.20 575.60) scale(1.4550)"><use href="#sil" x="0" y="0.9" fill="#b828d0"/><use href="#sil" x="0" y="-0.9" fill="#50f0b0"/><use href="#sil" x="-0.9" y="0" fill="#2a9cd0"/><use href="#sil" x="0.9" y="0" fill="#ff78b4"/><use href="#sil" fill="#8080ff"/></g><rect x="1524.70" y="574.10" width="45.94" height="53.76" fill="none" stroke="rgba(255,255,255,0.58)" stroke-width="1.15"/><g transform="translate(1574.70 575.60) scale(1.4550)"><use href="#sil" x="0" y="0.9" fill="#b828d0"/><use href="#sil" x="0" y="-0.9" fill="#50f0b0"/><use href="#sil" x="-0.9" y="0" fill="#2a9cd0"/><use href="#sil" x="0.9" y="0" fill="#ff78b4"/><use href="#sil" fill="#8080ff"/></g><rect x="1573.20" y="574.10" width="45.94" height="53.76" fill="none" stroke="rgba(255,255,255,0.58)" stroke-width="1.15"/><g transform="translate(1623.20 575.60) scale(1.4550)"><use href="#sil" x="0" y="0.9" fill="#b828d0"/><use href="#sil" x="0" y="-0.9" fill="#50f0b0"/><use href="#sil" x="-0.9" y="0" fill="#2a9cd0"/><use href="#sil" x="0.9" y="0" fill="#ff78b4"/><use href="#sil" fill="#8080ff"/></g><rect x="1621.70" y="574.10" width="45.94" height="53.76" fill="none" stroke="rgba(255,255,255,0.58)" stroke-width="1.15"/><g transform="translate(1477.70 631.92) scale(1.4550)"><use href="#sil" x="0" y="0.9" fill="#b828d0"/><use href="#sil" x="0" y="-0.9" fill="#50f0b0"/><use href="#sil" x="-0.9" y="0" fill="#2a9cd0"/><use href="#sil" x="0.9" y="0" fill="#ff78b4"/><use href="#sil" fill="#8080ff"/></g><rect x="1476.20" y="630.42" width="45.94" height="53.76" fill="none" stroke="rgba(255,255,255,0.58)" stroke-width="1.15"/><g transform="translate(1526.20 631.92) scale(1.4550)"><use href="#sil" x="0" y="0.9" fill="#b828d0"/><use href="#sil" x="0" y="-0.9" fill="#50f0b0"/><use href="#sil" x="-0.9" y="0" fill="#2a9cd0"/><use href="#sil" x="0.9" y="0" fill="#ff78b4"/><use href="#sil" fill="#8080ff"/></g><rect x="1524.70" y="630.42" width="45.94" height="53.76" fill="none" stroke="rgba(255,255,255,0.58)" stroke-width="1.15"/><g transform="translate(1574.70 631.92) scale(1.4550)"><use href="#sil" x="0" y="0.9" fill="#b828d0"/><use href="#sil" x="0" y="-0.9" fill="#50f0b0"/><use href="#sil" x="-0.9" y="0" fill="#2a9cd0"/><use href="#sil" x="0.9" y="0" fill="#ff78b4"/><use href="#sil" fill="#8080ff"/></g><rect x="1573.20" y="630.42" width="45.94" height="53.76" fill="none" stroke="rgba(255,255,255,0.58)" stroke-width="1.15"/><g transform="translate(1623.20 631.92) scale(1.4550)"><use href="#sil" x="0" y="0.9" fill="#b828d0"/><use href="#sil" x="0" y="-0.9" fill="#50f0b0"/><use href="#sil" x="-0.9" y="0" fill="#2a9cd0"/><use href="#sil" x="0.9" y="0" fill="#ff78b4"/><use href="#sil" fill="#8080ff"/></g><rect x="1621.70" y="630.42" width="45.94" height="53.76" fill="none" stroke="rgba(255,255,255,0.58)" stroke-width="1.15"/><g transform="translate(1477.70 688.24) scale(1.4550)"><use href="#sil" x="0" y="0.9" fill="#b828d0"/><use href="#sil" x="0" y="-0.9" fill="#50f0b0"/><use href="#sil" x="-0.9" y="0" fill="#2a9cd0"/><use href="#sil" x="0.9" y="0" fill="#ff78b4"/><use href="#sil" fill="#8080ff"/></g><rect x="1476.20" y="686.74" width="45.94" height="53.76" fill="none" stroke="rgba(255,255,255,0.58)" stroke-width="1.15"/><g transform="translate(1526.20 688.24) scale(1.4550)"><use href="#sil" x="0" y="0.9" fill="#b828d0"/><use href="#sil" x="0" y="-0.9" fill="#50f0b0"/><use href="#sil" x="-0.9" y="0" fill="#2a9cd0"/><use href="#sil" x="0.9" y="0" fill="#ff78b4"/><use href="#sil" fill="#8080ff"/></g><rect x="1524.70" y="686.74" width="45.94" height="53.76" fill="none" stroke="rgba(255,255,255,0.58)" stroke-width="1.15"/><g transform="translate(1574.70 688.24) scale(1.4550)"><use href="#sil" x="0" y="0.9" fill="#b828d0"/><use href="#sil" x="0" y="-0.9" fill="#50f0b0"/><use href="#sil" x="-0.9" y="0" fill="#2a9cd0"/><use href="#sil" x="0.9" y="0" fill="#ff78b4"/><use href="#sil" fill="#8080ff"/></g><rect x="1573.20" y="686.74" width="45.94" height="53.76" fill="none" stroke="rgba(255,255,255,0.58)" stroke-width="1.15"/><g transform="translate(1623.20 688.24) scale(1.4550)"><use href="#sil" x="0" y="0.9" fill="#b828d0"/><use href="#sil" x="0" y="-0.9" fill="#50f0b0"/><use href="#sil" x="-0.9" y="0" fill="#2a9cd0"/><use href="#sil" x="0.9" y="0" fill="#ff78b4"/><use href="#sil" fill="#8080ff"/></g><rect x="1621.70" y="686.74" width="45.94" height="53.76" fill="none" stroke="rgba(255,255,255,0.58)" stroke-width="1.15"/><g transform="translate(1477.70 744.57) scale(1.4550)"><use href="#sil" x="0" y="0.9" fill="#b828d0"/><use href="#sil" x="0" y="-0.9" fill="#50f0b0"/><use href="#sil" x="-0.9" y="0" fill="#2a9cd0"/><use href="#sil" x="0.9" y="0" fill="#ff78b4"/><use href="#sil" fill="#8080ff"/></g><rect x="1476.20" y="743.07" width="45.94" height="53.76" fill="none" stroke="rgba(255,255,255,0.58)" stroke-width="1.15"/><g transform="translate(1526.20 744.57) scale(1.4550)"><use href="#sil" x="0" y="0.9" fill="#b828d0"/><use href="#sil" x="0" y="-0.9" fill="#50f0b0"/><use href="#sil" x="-0.9" y="0" fill="#2a9cd0"/><use href="#sil" x="0.9" y="0" fill="#ff78b4"/><use href="#sil" fill="#8080ff"/></g><rect x="1524.70" y="743.07" width="45.94" height="53.76" fill="none" stroke="rgba(255,255,255,0.58)" stroke-width="1.15"/></svg>
<div class="t" style="left:1508.00px;top:859px;height:22px;line-height:22px;font-size:17.8px;color:#f4f4f4;font-weight:bold;letter-spacing:0.798px;text-shadow:0 0 2px #000,0 1px 2px #000,1px 1px 1px #000;">Witch_Normal</div>
<div class="t" style="left:1390.40px;top:881px;height:22px;line-height:22px;font-size:17.8px;color:#f4f4f4;font-weight:bold;letter-spacing:1.050px;text-shadow:0 0 2px #000,0 1px 2px #000,1px 1px 1px #000;">123x143 (NPOT)</div>
<div class="t" style="left:1550.60px;top:881px;height:22px;line-height:22px;font-size:17.8px;color:#f4f4f4;font-weight:bold;letter-spacing:0.199px;text-shadow:0 0 2px #000,0 1px 2px #000,1px 1px 1px #000;">RGBA8 sRGB</div>
<div class="t" style="left:1683.00px;top:881px;height:22px;line-height:22px;font-size:17.8px;color:#f4f4f4;font-weight:bold;letter-spacing:0.783px;text-shadow:0 0 2px #000,0 1px 2px #000,1px 1px 1px #000;">68.7 KB</div>
<div class="a" style="left:1223px;top:911px;width:697px;height:1.5px;background:#1a1a1a;"></div>
<div class="a" style="left:1223px;top:912.5px;width:697px;height:75.5px;background:#3c3c3c;"></div>
<div class="a" style="left:1882.5px;top:919px;width:30px;height:23px;background:#2c4f8c;border-radius:11.5px;"></div>
<svg class="a" style="left:1889.5px;top:923px;" width="16" height="16" viewBox="0 0 16 16"><path d="M1.2 1.2H7.4L14.6 8.4L8.4 14.6L1.2 7.4Z" fill="#f0f0f0"/><circle cx="4.6" cy="4.6" r="1.4" fill="#2c4f8c"/></svg>
<div class="t" style="left:1229.10px;top:957px;height:23px;line-height:23px;font-size:18.5px;color:#bcbcbc;font-weight:normal;letter-spacing:0.662px;">AssetBundle</div>
<div class="a" style="left:1372.4px;top:956px;width:402.8px;height:24.5px;background:#515151;border:1.3px solid #282828;border-radius:4.5px;"></div>
<div class="a" style="left:1787px;top:956px;width:127.5px;height:24.5px;background:#515151;border:1.3px solid #282828;border-radius:4.5px;"></div>
<div class="t" style="left:1378.60px;top:957px;height:23px;line-height:23px;font-size:18.5px;color:#e0e0e0;font-weight:normal;letter-spacing:0.691px;">None</div>
<div class="t" style="left:1792.40px;top:957px;height:23px;line-height:23px;font-size:18.5px;color:#e0e0e0;font-weight:normal;letter-spacing:0.691px;">None</div>
<svg class="a" style="left:1756.6px;top:964.75px;" width="11" height="6.5" viewBox="0 0 11 6.5"><path d="M0 0H11L5.5 6.5Z" fill="#d0d0d0"/></svg>
<svg class="a" style="left:1893.7px;top:964.75px;" width="11" height="6.5" viewBox="0 0 11 6.5"><path d="M0 0H11L5.5 6.5Z" fill="#d0d0d0"/></svg>
<div class="a" style="left:0px;top:988px;width:1920px;height:35px;background:#141414;"></div>
<div class="a" style="left:1795px;top:992px;width:2px;height:31px;background:#232323;"></div>
<div class="a" style="left:1835.4px;top:992px;width:3.2px;height:31px;background:#232323;"></div>
<div class="a" style="left:1877.4px;top:992px;width:2.2px;height:31px;background:#232323;"></div>
<div class="a" style="left:1918px;top:992px;width:2px;height:31px;background:#232323;"></div>
<svg class="a" style="left:0;top:0" width="1920" height="1023"><g fill="#c8c8c8"><ellipse cx="1816.5" cy="1009.6" rx="6.4" ry="8.6"/><ellipse cx="1816.5" cy="1000.6" rx="4" ry="3.2"/></g><g stroke="#c8c8c8" stroke-width="1.7" fill="none" stroke-linecap="round"><path d="M1813.6 999L1811.6 997M1819.4 999L1821.4 997M1810.6 1005.5L1807.4 1003.2M1822.4 1005.5L1825.6 1001.2M1810.2 1010.2H1806.4M1822.8 1010.2H1826.8M1810.8 1014.6L1807.6 1017.2M1822.2 1014.6L1825.4 1017.2"/></g><path d="M1807.9 996.4L1828.9 1017.4" stroke="#141414" stroke-width="2"/><path d="M1806.4 997.4L1827.4 1018.4" stroke="#c8c8c8" stroke-width="1.7"/><g fill="#c8c8c8"><ellipse cx="1858.4" cy="1001.4" rx="9.8" ry="4.6"/><path d="M1848.6 1004.4c0 5.4 19.6 5.4 19.6 0v4.2c0 5.6-19.6 5.6-19.6 0Z"/><path d="M1848.6 1011c0 5.4 19.6 5.4 19.6 0v3.2c0 5.8-19.6 5.8-19.6 0Z"/></g><path d="M1850 996.4L1871 1017.4" stroke="#141414" stroke-width="2"/><path d="M1848.5 997.4L1869.5 1018.4" stroke="#c8c8c8" stroke-width="1.7"/><circle cx="1899.6" cy="1007.2" r="10.2" fill="none" stroke="#c8c8c8" stroke-width="1.6"/><path d="M1895 1007.4L1898.9 1011.3L1904.2 1004.2" fill="none" stroke="#c8c8c8" stroke-width="2.1"/></svg>
<div class="a" style="left:1137px;top:578.3px;width:185px;height:53.7px;background:#f2f2f2;border:1px solid #fdfdfd;box-shadow:2px 2px 3px rgba(0,0,0,0.55);"></div>
<div class="a" style="left:1140px;top:605px;width:179.3px;height:23.7px;background:#91c9f7;"></div>
<div class="t" style="left:1174.20px;top:584px;height:19px;line-height:19px;font-size:15px;color:#000000;font-weight:normal;letter-spacing:-0.360px;">_MaskTex</div>
<div class="t" style="left:1174.20px;top:608px;height:19px;line-height:19px;font-size:15px;color:#000000;font-weight:normal;letter-spacing:0.048px;">_NormalMap</div>
</div></body></html>
